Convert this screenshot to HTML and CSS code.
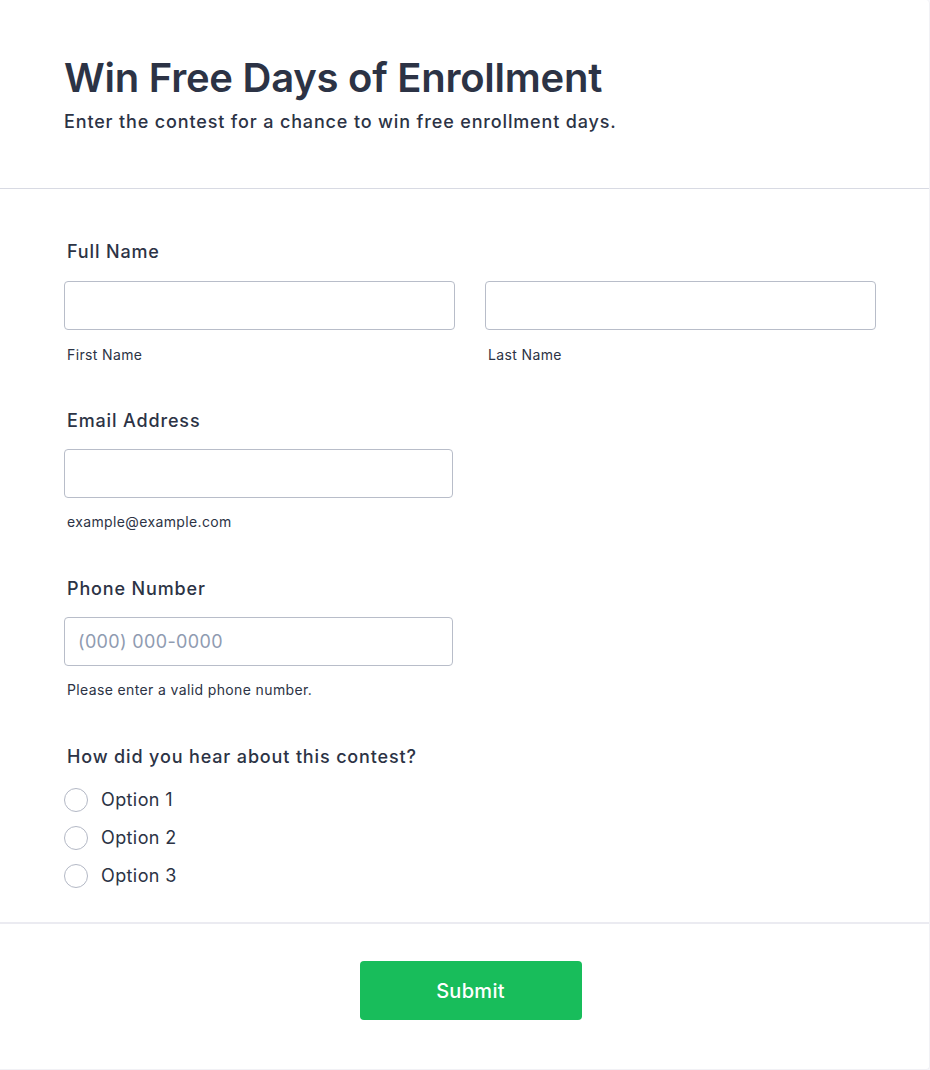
FILE: index.html
```html
<!DOCTYPE html>
<html lang="en">
<head>
<meta charset="utf-8">
<title>Win Free Days of Enrollment</title>
<link rel="stylesheet" href="styles.css">
</head>
<body>
<form class="card">
  <header class="header">
    <h1 class="title">Win Free Days of Enrollment</h1>
    <p class="subtitle">Enter the contest for a chance to win free enrollment days.</p>
  </header>
  <div class="body">
    <div class="field first">
      <label class="label">Full Name</label>
      <div class="name-row">
        <div class="sub">
          <input class="input" type="text">
          <span class="sublabel">First Name</span>
        </div>
        <div class="sub">
          <input class="input" type="text">
          <span class="sublabel">Last Name</span>
        </div>
      </div>
    </div>
    <div class="field">
      <label class="label">Email Address</label>
      <div class="sub single">
        <input class="input" type="email">
        <span class="sublabel">example@example.com</span>
      </div>
    </div>
    <div class="field">
      <label class="label">Phone Number</label>
      <div class="sub single">
        <input class="input" type="tel" placeholder="(000) 000-0000">
        <span class="sublabel">Please enter a valid phone number.</span>
      </div>
    </div>
    <div class="field radios">
      <label class="label">How did you hear about this contest?</label>
      <div class="options">
        <label class="option"><span class="radio"></span><span>Option 1</span></label>
        <label class="option"><span class="radio"></span><span>Option 2</span></label>
        <label class="option"><span class="radio"></span><span>Option 3</span></label>
      </div>
    </div>
  </div>
  <footer class="footer">
    <button type="button" class="submit">Submit</button>
  </footer>
</form>
</body>
</html>
```

FILE: styles.css
```css
* { box-sizing: border-box; }
html, body {
  margin: 0;
  padding: 0;
  background: #f7f7fb;
}
body {
  font-family: Inter, "Noto Sans", "Liberation Sans", sans-serif;
  color: #2c3345;
}
.card {
  width: 930px;
  height: 1070px;
  background: #ffffff;
  border-right: 1px solid #f1f1f5;
  border-bottom: 1px solid #f1f1f5;
  border-radius: 0 4px 4px 0;
  display: flex;
  flex-direction: column;
}
.header {
  padding: 54px 64px 53px 64px;
  border-bottom: 1px solid #d8dae3;
}
.title {
  margin: 0;
  font-size: 40px;
  line-height: 48px;
  font-weight: 600;
  letter-spacing: -0.25px;
}
.subtitle {
  margin: 6px 0 0;
  font-size: 18px;
  line-height: 27px;
  font-weight: 500;
  letter-spacing: 0.85px;
}
.body {
  padding: 49px 55px 33px 64px;
  display: flex;
  flex-direction: column;
  gap: 43px;
}
.field {
  display: flex;
  flex-direction: column;
  gap: 15px;
}
.field.first {
  gap: 16px;
  margin-bottom: -1px;
}
.field.first .sub { gap: 14px; }
.field.radios { gap: 16px; }
.label {
  padding-left: 3px;
  font-size: 18px;
  line-height: 27px;
  font-weight: 500;
  letter-spacing: 0.85px;
}
.name-row {
  display: grid;
  grid-template-columns: 391px 391px;
  gap: 30px;
}
.sub {
  display: flex;
  flex-direction: column;
  gap: 13px;
}
.single { width: 389px; }
.input {
  width: 100%;
  height: 49px;
  border: 1px solid #b8bdc9;
  border-radius: 4px;
  background: #ffffff;
  padding: 0 13px;
  font-family: inherit;
  font-size: 18px;
  letter-spacing: 0.35px;
  color: #2c3345;
  outline: none;
}
.input::placeholder { color: #8f9bb1; }
.sublabel {
  padding-left: 3px;
  font-size: 14px;
  line-height: 21px;
  letter-spacing: 0.37px;
  color: #2c3345;
}
.options {
  display: flex;
  flex-direction: column;
  gap: 11px;
}
.option {
  display: flex;
  align-items: center;
  gap: 13px;
  font-size: 18px;
  line-height: 27px;
  letter-spacing: 0.4px;
}
.radio {
  width: 24px;
  height: 24px;
  border: 1px solid #b3b8c5;
  border-radius: 50%;
  background: #ffffff;
  flex: none;
}
.footer {
  border-top: 2px solid #ebebf1;
  padding-top: 37px;
  display: flex;
  justify-content: center;
}
.submit {
  width: 222px;
  height: 59px;
  margin-left: 12px;
  border: none;
  border-radius: 4px;
  background: #18bd5b;
  color: #ffffff;
  font-family: inherit;
  font-size: 20px;
  font-weight: 500;
  letter-spacing: 0.3px;
  cursor: pointer;
}
```
